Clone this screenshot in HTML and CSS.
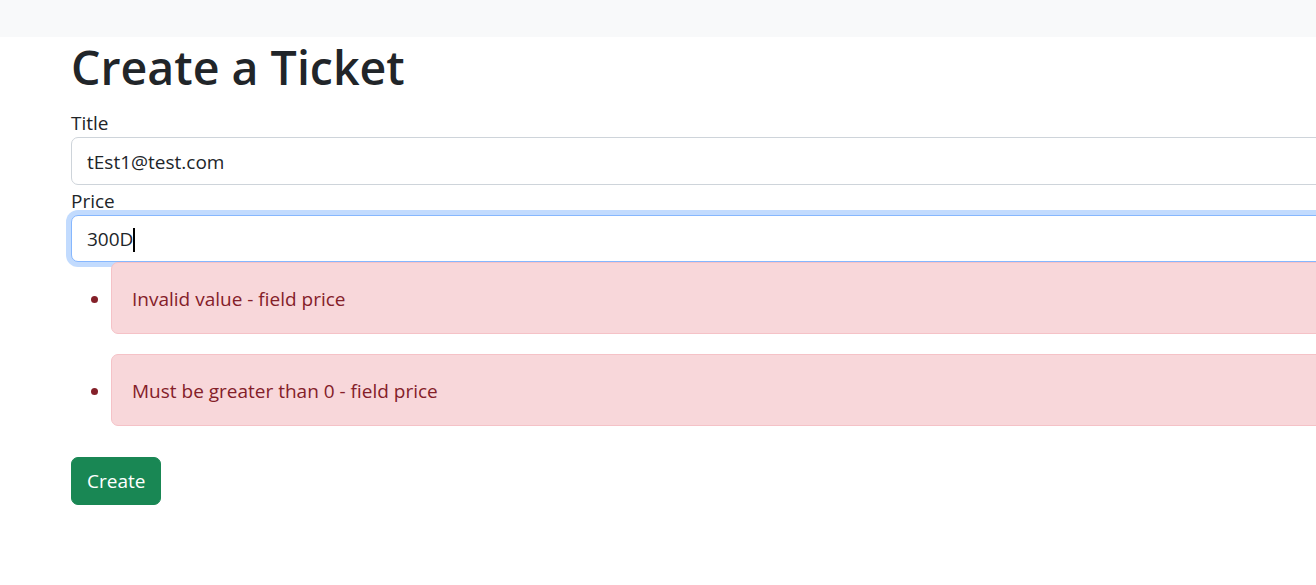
FILE: index.html
```html
<!DOCTYPE html>
<html lang="en">
<head>
<meta charset="utf-8">
<title>Create a Ticket</title>
<link rel="stylesheet" href="styles.css">
</head>
<body>
<nav class="navbar"></nav>
<main class="container">
  <h1 class="page-title">Create a Ticket</h1>
  <form class="ticket-form">
    <label class="field-label" for="title">Title</label>
    <input class="form-control" id="title" type="text" value="tEst1@test.com">
    <label class="field-label" for="price">Price</label>
    <div class="form-control is-focused" id="price" role="textbox">300D<span class="caret"></span></div>
    <ul class="error-list">
      <li class="alert alert-danger">Invalid value - field price</li>
      <li class="alert alert-danger">Must be greater than 0 - field price</li>
    </ul>
    <button class="btn btn-success" type="button">Create</button>
  </form>
</main>
</body>
</html>
```
FILE: styles.css
```css
* { box-sizing: border-box; }
html, body { margin: 0; padding: 0; overflow: hidden; }
body {
  font-family: "Open Sans", "Liberation Sans", sans-serif;
  font-size: 19px;
  line-height: 30px;
  color: #212529;
  background: #fff;
}
.navbar {
  height: 37px;
  background: #f8f9fa;
}
.container {
  margin-left: 71px;
  width: 1320px;
}
.page-title {
  margin: 0 0 10px;
  font-size: 46.5px;
  line-height: 60px;
  font-weight: 600;
  color: #212529;
}
.ticket-form { display: flex; flex-direction: column; align-items: stretch; }
.field-label { display: block; height: 30px; padding-top: 1px; }
.form-control {
  display: block;
  width: 100%;
  height: 47.5px;
  padding: 8px 15px 6px;
  font: inherit;
  color: #212529;
  background: #fff;
  border: 1px solid #ced4da;
  border-radius: 7px;
  outline: none;
}
.form-control.is-focused {
  border-color: #86b7fe;
  box-shadow: 0 0 0 5px rgba(13, 110, 253, .25);
  line-height: 30px;
}
.caret {
  display: inline-block;
  width: 2px;
  height: 24px;
  background: #000;
  vertical-align: -6px;
}
.error-list {
  margin: 0 0 11px;
  padding-left: 40px;
}
.alert {
  position: relative;
  padding: 21px 20px 19px;
  margin-bottom: 20px;
  border: 1px solid transparent;
  border-radius: 7px;
  line-height: 30px;
}
.alert-danger {
  color: #842029;
  background: #f8d7da;
  border-color: #f5c2c7;
}
.btn {
  align-self: flex-start;
  font: inherit;
  line-height: 30px;
  padding: 8px 15px 7px;
  height: 47.5px;
  border: 1px solid transparent;
  border-radius: 7px;
  cursor: pointer;
}
.btn-success {
  color: #fff;
  background: #198754;
  border-color: #198754;
}
```
